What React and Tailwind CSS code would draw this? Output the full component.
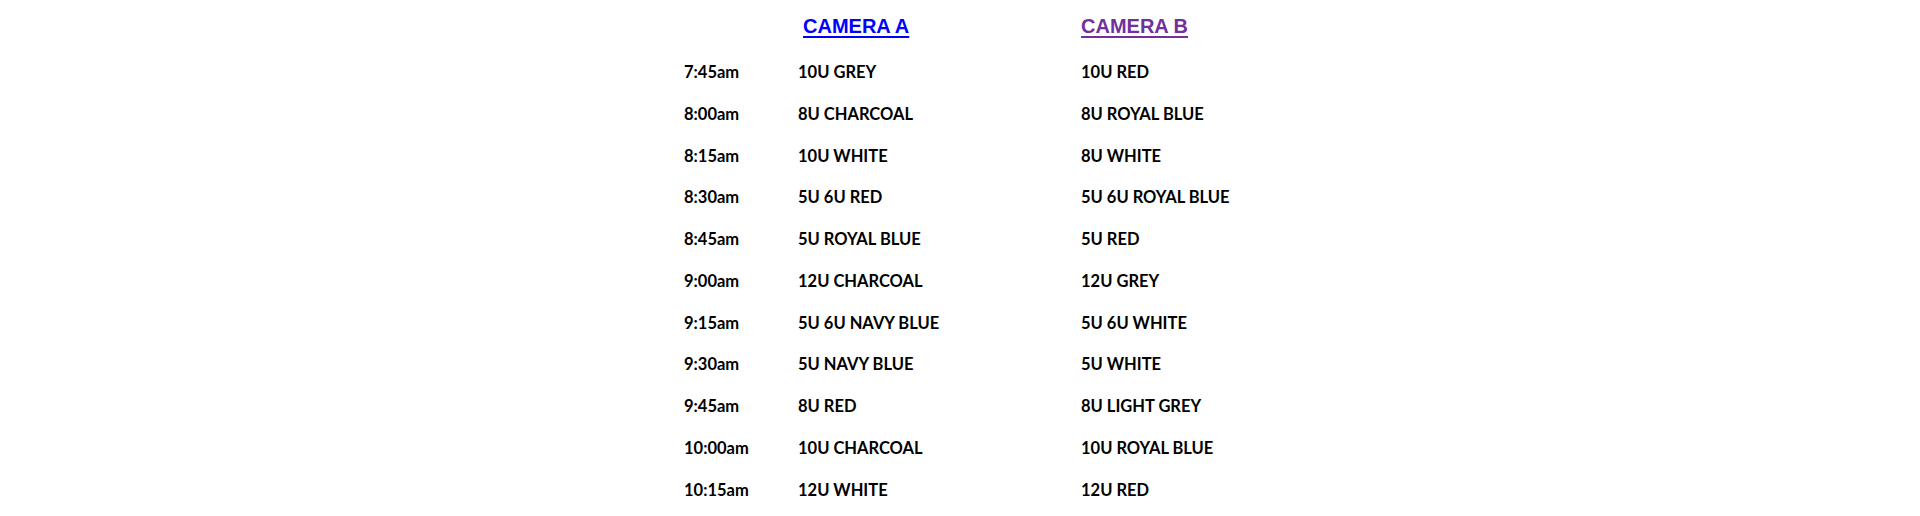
import React from "react";

const rows = [
  { time: "7:45am", a: "10U GREY", b: "10U RED" },
  { time: "8:00am", a: "8U CHARCOAL", b: "8U ROYAL BLUE" },
  { time: "8:15am", a: "10U WHITE", b: "8U WHITE" },
  { time: "8:30am", a: "5U 6U RED", b: "5U 6U ROYAL BLUE" },
  { time: "8:45am", a: "5U ROYAL BLUE", b: "5U RED" },
  { time: "9:00am", a: "12U CHARCOAL", b: "12U GREY" },
  { time: "9:15am", a: "5U 6U NAVY BLUE", b: "5U 6U WHITE" },
  { time: "9:30am", a: "5U NAVY BLUE", b: "5U WHITE" },
  { time: "9:45am", a: "8U RED", b: "8U LIGHT GREY" },
  { time: "10:00am", a: "10U CHARCOAL", b: "10U ROYAL BLUE" },
  { time: "10:15am", a: "12U WHITE", b: "12U RED" },
];

const App = () => {
  return (
    <div className="w-[1920px] h-[516px] bg-white overflow-hidden">
      <div className="mx-auto w-[552px] pt-[1px]">
        {/* Headers */}
        <div className="grid grid-cols-[114px_283px_155px] h-[50.5px] items-center font-['Liberation_Sans',Arial,sans-serif] font-bold text-[20px]">
          <div />
          <div className="pl-[5px] pb-[1px]">
            <span className="text-[#0000ff] underline decoration-2 underline-offset-[3px]">CAMERA A</span>
          </div>
          <div className="pb-[1px]">
            <span className="text-[#7030a0] underline decoration-2 underline-offset-[3px]">CAMERA B</span>
          </div>
        </div>

        {/* Schedule */}
        <div className="font-['Lato','Open_Sans',sans-serif] font-bold text-[16.5px] text-black">
          {rows.map((row) => (
            <div key={row.time} className="grid grid-cols-[114px_283px_155px] h-[41.75px] items-center whitespace-nowrap">
              <div>{row.time}</div>
              <div>{row.a}</div>
              <div>{row.b}</div>
            </div>
          ))}
        </div>
      </div>
    </div>
  );
};

export default App;
